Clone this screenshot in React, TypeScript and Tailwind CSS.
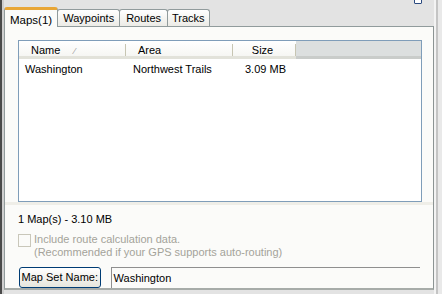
import * as React from "react";

const font = { fontFamily: '"Liberation Sans", Tahoma, Arial, sans-serif' };

function Tab({ label, active, pad = 4 }: { label: string; active?: boolean; pad?: number }) {
  if (active) {
    return (
      <div className="relative -mb-px z-10 h-[20px] px-[5px] pt-[3px] flex items-start bg-[#fbfbf9] border-x border-[#919b9c] rounded-t-[3px] border-t-[3px] border-t-[#e8a636] text-[11.5px] leading-[14px] text-black">
        {label}
      </div>
    );
  }
  return (
    <div
      className="mt-[2px] h-[17px] flex items-center bg-gradient-to-b from-white to-[#ecebe6] border border-[#919b9c] border-b-0 rounded-t-[3px] text-[11px] leading-[14px] text-black -ml-px"
      style={{ paddingLeft: pad, paddingRight: pad }}
    >
      {label}
    </div>
  );
}

function HeaderCell({ label, width, align = "left", sort }: { label: string; width: number; align?: "left" | "center"; sort?: boolean }) {
  return (
    <div
      className="relative h-full flex items-center pt-[3px] shrink-0 bg-gradient-to-b from-white to-[#f6f6f3] border-b-[3px] border-[#e2e2da]"
      style={{ width }}
    >
      <span className={align === "center" ? "w-full text-center pr-[4px]" : "pl-[12px]"}>{label}</span>
      {sort && <span className="absolute left-[55px] top-[4px] text-[9px] text-[#9a9a9a]">⁄</span>}
      <div className="absolute right-0 top-[3px] h-[12px] w-px bg-[#c7c5b2]" />
    </div>
  );
}

export default function App() {
  return (
    <div className="w-[442px] h-[294px] bg-[#e3e3e3] flex overflow-hidden text-[11px]" style={font}>
      <div className="w-[2px] bg-[#4a4a4a] shrink-0" />
      <div className="w-[2px] bg-[#cfcfcf] shrink-0" />
      <div className="flex flex-col w-[430px] shrink-0">
        <div className="h-[7px] relative">
          <div className="absolute right-[12px] -top-[2px] w-[8px] h-[6px] border border-[#2b4a80] rounded-[1px] bg-white" />
        </div>
        <div className="flex items-end h-[19px] pl-0">
          <Tab label="Maps(1)" active />
          <Tab label="Waypoints" pad={5} />
          <Tab label="Routes" pad={6} />
          <Tab label="Tracks" pad={4} />
        </div>
        <div className="h-[264px] bg-[#fbfbf9] border border-[#919b9c] border-r-[#8c9494] border-b-2 border-b-[#a7aca9] flex flex-col px-[13px] pt-[13px]">
          <div className="h-[165px] w-[404px] border border-[#7f9db9] bg-white flex flex-col">
            <div className="h-[18px] flex text-[11px] text-black">
              <HeaderCell label="Name" width={107} sort />
              <HeaderCell label="Area" width={107} />
              <HeaderCell label="Size" width={63} align="center" />
              <div className="flex-1 bg-[#dcdfdf] border-b-[3px] border-[#c9ccca]" />
            </div>
            <div className="flex h-[20px] items-center text-[11px] text-black">
              <div className="w-[107px] pl-[6px]">Washington</div>
              <div className="w-[107px] pl-[7px]">Northwest Trails</div>
              <div className="w-[63px] pl-[12px]">3.09 MB</div>
            </div>
          </div>
          <div className="h-[3px] -mx-[13px] bg-[#efeee8]" />
          <div className="mt-[8px] h-[13px] flex items-center text-black">1 Map(s) - 3.10 MB</div>
          <div className="mt-[7px] flex items-start text-[#a4a39a]">
            <div className="w-[13px] h-[13px] border border-[#c9c7ba] bg-[#fbfbf9] shrink-0 mt-[1px]" />
            <div className="pl-[3px] leading-[13px]">
              <div>Include route calculation data.</div>
              <div>(Recommended if your GPS supports auto-routing)</div>
            </div>
          </div>
          <div className="mt-[8px] flex items-center">
            <div className="ml-px w-[82px] h-[21px] flex items-center justify-center rounded-[3px] border border-[#003c74] bg-gradient-to-b from-white to-[#e6e5dd] text-black">
              Map Set Name:
            </div>
            <div className="ml-[10px] w-[311px] h-[21px] flex items-center border-l border-t border-[#8f8f8f] pl-[2px] text-black">
              Washington
            </div>
          </div>
        </div>
      </div>
      <div className="w-[2px] bg-[#f3f3f3] shrink-0" />
      <div className="w-[2px] bg-[#c4c4c4] shrink-0" />
      <div className="flex-1 bg-[#e9e9e9]" />
    </div>
  );
}
